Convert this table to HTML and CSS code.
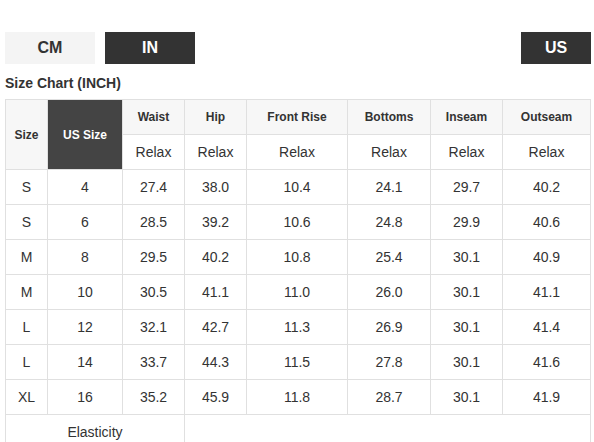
FILE: index.html
```html
<!DOCTYPE html>
<html lang="en">
<head>
    <meta charset="UTF-8">
    <meta name="viewport" content="width=device-width, initial-scale=1.0">
    <title>Size Chart</title>
    <link rel="stylesheet" href="styles.css">
</head>
<body>
    <div class="unit-bar">
        <button class="unit-btn">CM</button>
        <button class="unit-btn active">IN</button>
        <button class="unit-btn active region">US</button>
    </div>
    <h3 class="chart-title">Size Chart (INCH)</h3>
    <table class="size-table">
        <colgroup>
            <col style="width: 42px">
            <col style="width: 75px">
            <col style="width: 62px">
            <col style="width: 62px">
            <col style="width: 101px">
            <col style="width: 83px">
            <col style="width: 72px">
            <col style="width: 88px">
        </colgroup>
        <thead>
            <tr class="head-row">
                <th rowspan="2">Size</th>
                <th rowspan="2" class="us-size">US Size</th>
                <th>Waist</th>
                <th>Hip</th>
                <th>Front Rise</th>
                <th>Bottoms</th>
                <th>Inseam</th>
                <th>Outseam</th>
            </tr>
            <tr class="fit-row">
                <td>Relax</td>
                <td>Relax</td>
                <td>Relax</td>
                <td>Relax</td>
                <td>Relax</td>
                <td>Relax</td>
            </tr>
        </thead>
        <tbody>
            <tr><td>S</td><td>4</td><td>27.4</td><td>38.0</td><td>10.4</td><td>24.1</td><td>29.7</td><td>40.2</td></tr>
            <tr><td>S</td><td>6</td><td>28.5</td><td>39.2</td><td>10.6</td><td>24.8</td><td>29.9</td><td>40.6</td></tr>
            <tr><td>M</td><td>8</td><td>29.5</td><td>40.2</td><td>10.8</td><td>25.4</td><td>30.1</td><td>40.9</td></tr>
            <tr><td>M</td><td>10</td><td>30.5</td><td>41.1</td><td>11.0</td><td>26.0</td><td>30.1</td><td>41.1</td></tr>
            <tr><td>L</td><td>12</td><td>32.1</td><td>42.7</td><td>11.3</td><td>26.9</td><td>30.1</td><td>41.4</td></tr>
            <tr><td>L</td><td>14</td><td>33.7</td><td>44.3</td><td>11.5</td><td>27.8</td><td>30.1</td><td>41.6</td></tr>
            <tr><td>XL</td><td>16</td><td>35.2</td><td>45.9</td><td>11.8</td><td>28.7</td><td>30.1</td><td>41.9</td></tr>
            <tr><td colspan="3">Elasticity</td><td colspan="5"></td></tr>
        </tbody>
    </table>
</body>
</html>
```

FILE: styles.css
```css
body {
    margin: 0;
    font-family: "Liberation Sans", Arial, sans-serif;
    color: #333;
    background-color: #fff;
}

.unit-bar {
    display: flex;
    gap: 10px;
    margin-top: 32px;
    padding: 0 3px 0 5px;
}

.unit-btn {
    width: 90px;
    height: 32px;
    border: none;
    padding: 0;
    background-color: #f4f4f4;
    color: #333;
    font-family: inherit;
    font-size: 16px;
    font-weight: bold;
    cursor: pointer;
}

.unit-btn.active {
    background-color: #333;
    color: #fff;
}

.unit-btn.region {
    width: 70px;
    margin-left: auto;
}

.chart-title {
    margin: 10px 0 0 5px;
    font-size: 14px;
    line-height: 18px;
    font-weight: bold;
}

.size-table {
    margin: 7px 0 0 5px;
    width: 586px;
    table-layout: fixed;
    border-collapse: collapse;
}

.size-table th,
.size-table td {
    border: 1px solid #e0e0e0;
    padding: 0;
    text-align: center;
    font-size: 14px;
    height: 34px;
}

.size-table th {
    font-size: 12px;
    font-weight: bold;
    background-color: #f7f7f7;
}

.size-table th.us-size {
    background-color: #444;
    color: #fff;
}
```
